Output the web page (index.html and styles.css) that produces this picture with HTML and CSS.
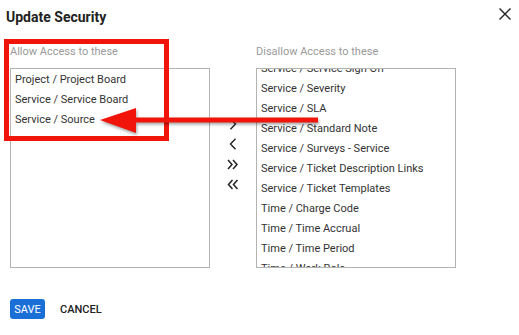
FILE: index.html
```html
<!DOCTYPE html>
<html lang="en">
<head>
  <meta charset="UTF-8">
  <title>Update Security</title>
  <link rel="stylesheet" href="styles.css">
</head>
<body>
  <div class="dialog">
    <div class="head">
      <h2 class="title">Update Security</h2>
      <button class="close" aria-label="Close">
        <svg width="12" height="12" viewBox="0 0 12 12"><path d="M0.5 0.5 L11.5 11.5 M11.5 0.5 L0.5 11.5" stroke="#222" stroke-width="1.4" fill="none"/></svg>
      </button>
    </div>

    <div class="lists">
      <div class="col">
        <div class="cap">Allow Access to these</div>
        <div class="box">
          <ul class="items">
            <li>Project / Project Board</li>
            <li>Service / Service Board</li>
            <li>Service / Source</li>
          </ul>
        </div>
      </div>

      <div class="moves">
        <button class="mv"><svg width="8" height="12" viewBox="0 0 8 12"><path d="M1.5 0.8 L6.5 6 L1.5 11.2" stroke="#222" stroke-width="1.4" fill="none"/></svg></button>
        <button class="mv"><svg width="8" height="12" viewBox="0 0 8 12"><path d="M6.5 0.8 L1.5 6 L6.5 11.2" stroke="#222" stroke-width="1.4" fill="none"/></svg></button>
        <button class="mv"><svg width="12" height="11" viewBox="0 0 12 11"><path d="M1 1 L5 5.5 L1 10 M6 1 L10 5.5 L6 10" stroke="#222" stroke-width="1.5" fill="none"/></svg></button>
        <button class="mv"><svg width="12" height="11" viewBox="0 0 12 11"><path d="M5.5 1 L1.5 5.5 L5.5 10 M10.5 1 L6.5 5.5 L10.5 10" stroke="#222" stroke-width="1.5" fill="none"/></svg></button>
      </div>

      <div class="col">
        <div class="cap">Disallow Access to these</div>
        <div class="box">
          <ul class="items scrolled">
            <li>Service / Service Sign Off</li>
            <li>Service / Severity</li>
            <li>Service / SLA</li>
            <li>Service / Standard Note</li>
            <li>Service / Surveys - Service</li>
            <li>Service / Ticket Description Links</li>
            <li>Service / Ticket Templates</li>
            <li>Time / Charge Code</li>
            <li>Time / Time Accrual</li>
            <li>Time / Time Period</li>
            <li>Time / Work Role</li>
          </ul>
        </div>
      </div>
    </div>

    <div class="actions">
      <button class="save">SAVE</button>
      <button class="cancel">CANCEL</button>
    </div>

    <!-- callout drawn over the screenshot -->
    <div class="mark"></div>
    <svg class="arrow" width="230" height="40" viewBox="0 0 230 40">
      <path d="M0 13 L36 1 L36 10.5 L218 10.5 L218 15.5 L36 15.5 L36 26 Z" fill="#f0140a"/>
    </svg>
  </div>
</body>
</html>
```
FILE: styles.css
```css
* { box-sizing: border-box; }
body {
  margin: 0;
  background: #fff;
  font-family: Roboto, "Liberation Sans", Arial, sans-serif;
  color: #333;
}
.dialog {
  position: relative;
  width: 519px;
  height: 335px;
  padding: 0 10px;
}
.head {
  display: flex;
  justify-content: space-between;
  align-items: flex-start;
  height: 40px;
}
.title {
  margin: 0;
  margin-left: -4px;
  padding-top: 9px;
  font-size: 14px;
  font-weight: 700;
  color: #222;
}
.close {
  margin-top: 8px;
  margin-right: -2px;
  padding: 0;
  border: none;
  background: none;
  width: 12px;
  height: 12px;
  display: flex;
}
.lists {
  display: flex;
  align-items: flex-start;
}
.col {
  width: 200px;
}
.cap {
  font-size: 11px;
  line-height: 13px;
  color: #9a9a9a;
  margin-top: 5px;
  height: 23px;
}
.box {
  height: 200px;
  border: 1px solid #b3b3b3;
  overflow: hidden;
  padding: 1px 4px 0;
}
.items {
  list-style: none;
  margin: 0;
  padding: 0;
}
.items li {
  height: 20px;
  line-height: 20px;
  font-size: 11px;
  color: #333;
  white-space: nowrap;
}
.items.scrolled {
  margin-top: -11px;
}
.moves {
  width: 46px;
  padding-top: 74px;
  display: flex;
  flex-direction: column;
  align-items: center;
}
.mv {
  height: 20px;
  width: 20px;
  padding: 0;
  border: none;
  background: none;
  display: flex;
  align-items: center;
  justify-content: center;
}
.actions {
  display: flex;
  align-items: center;
  gap: 15px;
  margin-top: 31px;
}
.save {
  height: 20px;
  width: 35px;
  padding: 0;
  border: none;
  border-radius: 3px;
  background: #1a6fd6;
  color: #fff;
  font-family: inherit;
  font-size: 11px;
}
.cancel {
  padding: 0;
  border: none;
  background: none;
  font-family: inherit;
  font-size: 11px;
  font-weight: 500;
  color: #222;
}
.mark {
  position: absolute;
  left: 4px;
  top: 39px;
  width: 165px;
  height: 102px;
  border: 5px solid #f0140a;
}
.arrow {
  position: absolute;
  left: 100px;
  top: 107px;
  filter: drop-shadow(1px 2px 1.5px rgba(0, 0, 0, 0.35));
}
```
